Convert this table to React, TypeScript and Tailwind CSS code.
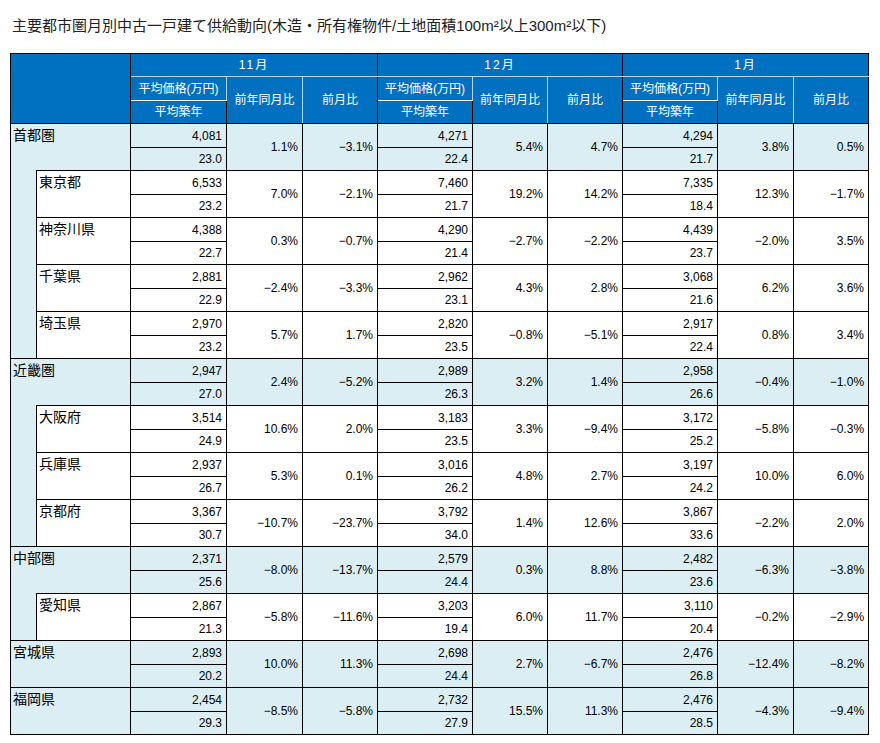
import React from "react";

type Month = [string, string, string, string];
type Row = { name: string; group: boolean; children?: Row[]; d: Month[] };

const M = "−";

const data: Row[] = [
  {
    name: "首都圏",
    group: true,
    d: [
      ["4,081", "23.0", "1.1%", M + "3.1%"],
      ["4,271", "22.4", "5.4%", "4.7%"],
      ["4,294", "21.7", "3.8%", "0.5%"],
    ],
    children: [
      { name: "東京都", group: false, d: [["6,533", "23.2", "7.0%", M + "2.1%"], ["7,460", "21.7", "19.2%", "14.2%"], ["7,335", "18.4", "12.3%", M + "1.7%"]] },
      { name: "神奈川県", group: false, d: [["4,388", "22.7", "0.3%", M + "0.7%"], ["4,290", "21.4", M + "2.7%", M + "2.2%"], ["4,439", "23.7", M + "2.0%", "3.5%"]] },
      { name: "千葉県", group: false, d: [["2,881", "22.9", M + "2.4%", M + "3.3%"], ["2,962", "23.1", "4.3%", "2.8%"], ["3,068", "21.6", "6.2%", "3.6%"]] },
      { name: "埼玉県", group: false, d: [["2,970", "23.2", "5.7%", "1.7%"], ["2,820", "23.5", M + "0.8%", M + "5.1%"], ["2,917", "22.4", "0.8%", "3.4%"]] },
    ],
  },
  {
    name: "近畿圏",
    group: true,
    d: [
      ["2,947", "27.0", "2.4%", M + "5.2%"],
      ["2,989", "26.3", "3.2%", "1.4%"],
      ["2,958", "26.6", M + "0.4%", M + "1.0%"],
    ],
    children: [
      { name: "大阪府", group: false, d: [["3,514", "24.9", "10.6%", "2.0%"], ["3,183", "23.5", "3.3%", M + "9.4%"], ["3,172", "25.2", M + "5.8%", M + "0.3%"]] },
      { name: "兵庫県", group: false, d: [["2,937", "26.7", "5.3%", "0.1%"], ["3,016", "26.2", "4.8%", "2.7%"], ["3,197", "24.2", "10.0%", "6.0%"]] },
      { name: "京都府", group: false, d: [["3,367", "30.7", M + "10.7%", M + "23.7%"], ["3,792", "34.0", "1.4%", "12.6%"], ["3,867", "33.6", M + "2.2%", "2.0%"]] },
    ],
  },
  {
    name: "中部圏",
    group: true,
    d: [
      ["2,371", "25.6", M + "8.0%", M + "13.7%"],
      ["2,579", "24.4", "0.3%", "8.8%"],
      ["2,482", "23.6", M + "6.3%", M + "3.8%"],
    ],
    children: [
      { name: "愛知県", group: false, d: [["2,867", "21.3", M + "5.8%", M + "11.6%"], ["3,203", "19.4", "6.0%", "11.7%"], ["3,110", "20.4", M + "0.2%", M + "2.9%"]] },
    ],
  },
  {
    name: "宮城県",
    group: true,
    d: [
      ["2,893", "20.2", "10.0%", "11.3%"],
      ["2,698", "24.4", "2.7%", M + "6.7%"],
      ["2,476", "26.8", M + "12.4%", M + "8.2%"],
    ],
  },
  {
    name: "福岡県",
    group: true,
    d: [
      ["2,454", "29.3", M + "8.5%", M + "5.8%"],
      ["2,732", "27.9", "15.5%", "11.3%"],
      ["2,476", "28.5", M + "4.3%", M + "9.4%"],
    ],
  },
];

const font = { fontFamily: '"Liberation Sans", "Noto Sans CJK JP", sans-serif' };

const hdr = "border border-black bg-[#0070c0] text-white font-normal text-[12px] leading-[14px] p-0 text-center align-middle";
const light = "#b4d4f2";

function DataCells({ d, blue, part }: { d: Month[]; blue: boolean; part: 0 | 1 }) {
  const bg = blue ? "bg-[#daeef3]" : "bg-white";
  const num = `border border-black ${bg} text-[12px] leading-[14px] text-right pr-[4px] pl-0 py-0 align-middle`;
  if (part === 1) {
    return (
      <>
        {d.map((m, i) => (
          <td key={i} className={num}>{m[1]}</td>
        ))}
      </>
    );
  }
  return (
    <>
      {d.map((m, i) => (
        <React.Fragment key={i}>
          <td className={num}>{m[0]}</td>
          <td rowSpan={2} className={num}>{m[2]}</td>
          <td rowSpan={2} className={num}>{m[3]}</td>
        </React.Fragment>
      ))}
    </>
  );
}

export default function App() {
  const body: React.ReactNode[] = [];
  data.forEach((g) => {
    const hasKids = !!g.children && g.children.length > 0;
    body.push(
      <tr key={g.name + "a"} className="h-[24px]">
        <td
          colSpan={2}
          rowSpan={2}
          className={`border border-black ${hasKids ? "border-b-0" : ""} bg-[#daeef3] text-[14px] leading-[16px] text-left align-top pl-[2px] pt-[3px] pr-0 pb-0 text-black`}
        >
          {g.name}
        </td>
        <DataCells d={g.d} blue={true} part={0} />
      </tr>
    );
    body.push(
      <tr key={g.name + "b"} className="h-[23px]">
        <DataCells d={g.d} blue={true} part={1} />
      </tr>
    );
    if (hasKids) {
      g.children!.forEach((c, ci) => {
        body.push(
          <tr key={c.name + "a"} className="h-[24px]">
            {ci === 0 && (
              <td rowSpan={g.children!.length * 2} className="border border-black border-t-0 bg-[#daeef3] p-0" />
            )}
            <td
              rowSpan={2}
              className="border border-black bg-white text-[14px] leading-[16px] text-left align-top pl-[2px] pt-[3px] pr-0 pb-0 text-black"
            >
              {c.name}
            </td>
            <DataCells d={c.d} blue={false} part={0} />
          </tr>
        );
        body.push(
          <tr key={c.name + "b"} className="h-[23px]">
            <DataCells d={c.d} blue={false} part={1} />
          </tr>
        );
      });
    }
  });

  const months = ["11月", "12月", "1月"];

  return (
    <div className="bg-white w-[880px] h-[743px] text-black" style={font}>
      <div className="pl-[12px] pt-[16px] text-[15px] leading-[20px] text-[#222]">
        主要都市圏月別中古一戸建て供給動向(木造・所有権物件/土地面積100m²以上300m²以下)
      </div>
      <table className="ml-[10px] mt-[17px] w-[859px] table-fixed border-collapse">
        <colgroup>
          <col className="w-[26px]" />
          <col className="w-[94px]" />
          <col className="w-[96px]" />
          <col className="w-[76px]" />
          <col className="w-[75px]" />
          <col className="w-[95px]" />
          <col className="w-[75px]" />
          <col className="w-[75px]" />
          <col className="w-[95px]" />
          <col className="w-[76px]" />
          <col className="w-[75px]" />
        </colgroup>
        <thead>
          <tr className="h-[23px]">
            <th colSpan={2} rowSpan={3} className={hdr}></th>
            {months.map((m) => (
              <th key={m} colSpan={3} className={`${hdr} border-b-[#b4d4f2] tracking-[2px]`}>
                {m}
              </th>
            ))}
          </tr>
          <tr className="h-[24px]">
            {months.map((m) => (
              <React.Fragment key={m}>
                <th className={`${hdr} border-t-[#b4d4f2] border-b-white border-r-[#b4d4f2]`}>平均価格(万円)</th>
                <th rowSpan={2} className={`${hdr} border-t-[#b4d4f2] border-r-[#b4d4f2]`}>前年同月比</th>
                <th rowSpan={2} className={`${hdr} border-t-[#b4d4f2]`}>前月比</th>
              </React.Fragment>
            ))}
          </tr>
          <tr className="h-[23px]">
            {months.map((m) => (
              <th key={m} className={`${hdr} border-t-white border-r-[#b4d4f2]`}>平均築年</th>
            ))}
          </tr>
        </thead>
        <tbody>{body}</tbody>
      </table>
      <span className="hidden">{light}</span>
    </div>
  );
}
